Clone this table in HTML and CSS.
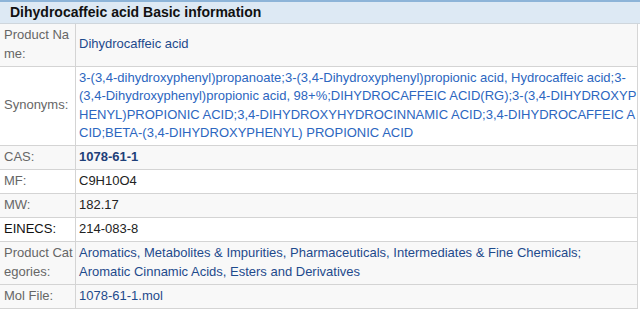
FILE: index.html
```html
<!DOCTYPE html>
<html>
<head>
<meta charset="utf-8">
<link rel="stylesheet" href="styles.css">
</head>
<body>
<div class="box">
  <div class="title">Dihydrocaffeic acid Basic information</div>
  <table class="info">
    <tr class="gray">
      <th>Product Name:</th>
      <td class="link">Dihydrocaffeic acid</td>
    </tr>
    <tr>
      <th>Synonyms:</th>
      <td class="syn">3-(3,4-dihydroxyphenyl)propanoate;3-(3,4-Dihydroxyphenyl)propionic acid, Hydrocaffeic acid;3-(3,4-Dihydroxyphenyl)propionic acid, 98+%;DIHYDROCAFFEIC ACID(RG);3-(3,4-DIHYDROXYPHENYL)PROPIONIC ACID;3,4-DIHYDROXYHYDROCINNAMIC ACID;3,4-DIHYDROCAFFEIC ACID;BETA-(3,4-DIHYDROXYPHENYL) PROPIONIC ACID</td>
    </tr>
    <tr class="gray">
      <th>CAS:</th>
      <td class="cas">1078-61-1</td>
    </tr>
    <tr>
      <th>MF:</th>
      <td>C9H10O4</td>
    </tr>
    <tr class="gray">
      <th>MW:</th>
      <td>182.17</td>
    </tr>
    <tr>
      <th class="dark">EINECS:</th>
      <td>214-083-8</td>
    </tr>
    <tr class="gray">
      <th>Product Categories:</th>
      <td class="link"><span class="cat">Aromatics,</span> <span class="cat">Metabolites &amp; Impurities,</span> <span class="cat">Pharmaceuticals,</span> <span class="cat">Intermediates &amp; Fine Chemicals;</span><span class="cat">Aromatic Cinnamic Acids, Esters and Derivatives</span></td>
    </tr>
    <tr class="gray">
      <th>Mol File:</th>
      <td class="link">1078-61-1.mol</td>
    </tr>
  </table>
</div>
</body>
</html>
```
FILE: styles.css
```css
html, body {
  margin: 0;
  padding: 0;
  background: #ffffff;
}
body {
  font-family: "Liberation Sans", Arial, sans-serif;
  width: 640px;
  overflow: hidden;
}
.box {
  width: 640px;
}
.title {
  background: #dde9f4;
  border-top: 2px solid #8db4d8;
  border-bottom: 1px solid #cfd6dc;
  height: 21px;
  line-height: 21px;
  padding-left: 10px;
  font-size: 14px;
  font-weight: bold;
  color: #111;
}
.info {
  width: 638px;
  border-collapse: collapse;
  table-layout: fixed;
  font-size: 13px;
  line-height: 18.5px;
  border-right: 1px solid #d6d6d6;
}
.info th, .info td {
  border-bottom: 1px solid #d4d4d4;
  padding: 2px 0 2.5px 3px;
  vertical-align: middle;
  text-align: left;
}
.info th {
  width: 71px;
  padding-left: 4px;
  font-weight: normal;
  color: #666;
  border-right: 1px solid #d4d4d4;
  word-break: break-all;
}
.info th.dark {
  color: #111;
}
.info td {
  color: #222;
  word-break: break-all;
}
.info tr.gray {
  background: #f8f8f8;
}
.info td.link {
  color: #1e4a8c;
}
.info td.syn {
  color: #2c66c0;
}
.info td.cas {
  color: #1e3f78;
  font-weight: bold;
}
.cat {
  white-space: nowrap;
}
```
